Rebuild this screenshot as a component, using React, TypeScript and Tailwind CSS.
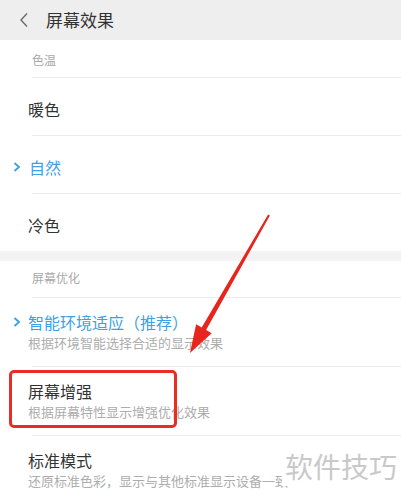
const font = '"Noto Sans CJK SC", "Noto Sans", sans-serif';

function Divider() {
  return <div className="ml-[32px] h-px bg-[#ececec]" />;
}

function SectionTitle({ label, top }: { label: string; top: string }) {
  return (
    <div className={`${top} h-auto pl-[32px] text-[12px] leading-[16px] text-[#a9a9a9]`}>{label}</div>
  );
}

function Chevron() {
  return (
    <svg width="8" height="11" viewBox="0 0 8 11" className="absolute left-[-15px] top-1/2 -translate-y-1/2">
      <path d="M1.5 1.5 L6 5.5 L1.5 9.5" fill="none" stroke="#3d9fe4" strokeWidth="1.8" />
    </svg>
  );
}

function PlainItem({ label, active }: { label: string; active?: boolean }) {
  return (
    <div className="relative h-[57px] pl-[28px] pt-[22px]">
      <div className="relative">
        {active && <Chevron />}
        <span className={`block text-[16px] leading-[18px] ${active ? 'pl-[1px] text-[#3d9fe4]' : 'text-[#333]'}`}>
          {label}
        </span>
      </div>
    </div>
  );
}

function DetailItem({ label, desc, active }: { label: string; desc: string; active?: boolean }) {
  return (
    <div className="h-[68px] pl-[28px] pt-[14px]">
      <div className="relative">
        {active && <Chevron />}
        <span className={`block text-[16px] leading-[20px] ${active ? 'text-[#3d9fe4]' : 'text-[#333]'}`}>{label}</span>
      </div>
      <div className="mt-[3px] whitespace-nowrap text-[13px] leading-[16px] text-[#adadad]">{desc}</div>
    </div>
  );
}

export default function App() {
  return (
    <div className="relative h-[504px] w-[401px] overflow-hidden bg-white" style={{ fontFamily: font }}>
      <div className="flex h-[40px] items-center bg-[#eeeeee]">
        <svg width="10" height="16" viewBox="0 0 10 16" className="ml-[19px]">
          <path d="M8 1.5 L2 8 L8 14.5" fill="none" stroke="#6a6a6a" strokeWidth="1.4" />
        </svg>
        <span className="ml-[17px] text-[17px] leading-[20px] text-[#333]">屏幕效果</span>
      </div>

      <div className="h-[37px]">
        <SectionTitle label="色温" top="pt-[12px]" />
      </div>
      <Divider />
      <PlainItem label="暖色" />
      <Divider />
      <PlainItem label="自然" active />
      <Divider />
      <PlainItem label="冷色" />

      <div className="h-[10px] bg-[#f3f3f3]" />

      <div className="h-[36px]">
        <SectionTitle label="屏幕优化" top="pt-[9px]" />
      </div>
      <Divider />
      <DetailItem label="智能环境适应（推荐）" desc="根据环境智能选择合适的显示效果" active />
      <Divider />
      <DetailItem label="屏幕增强" desc="根据屏幕特性显示增强优化效果" />
      <Divider />
      <DetailItem label="标准模式" desc="还原标准色彩，显示与其他标准显示设备一致" />

      <div className="absolute left-[9px] top-[370px] h-[58px] w-[168px] rounded-[5px] border-[3px] border-[#e62e26]" />

      <svg width="401" height="504" viewBox="0 0 401 504" className="pointer-events-none absolute left-0 top-0">
        <polygon
          points="269.9,215.5 206.1,330 211.7,333.2 190,353 196.1,324.2 201.7,327.5 268.1,214.5"
          fill="#e8251d"
        />
      </svg>

      <div className="absolute left-[282px] top-[446px] bg-white pl-[3px] pr-[3px] text-[28px] leading-[40px] text-[#c9c9c9]">
        软件技巧
      </div>
    </div>
  );
}
